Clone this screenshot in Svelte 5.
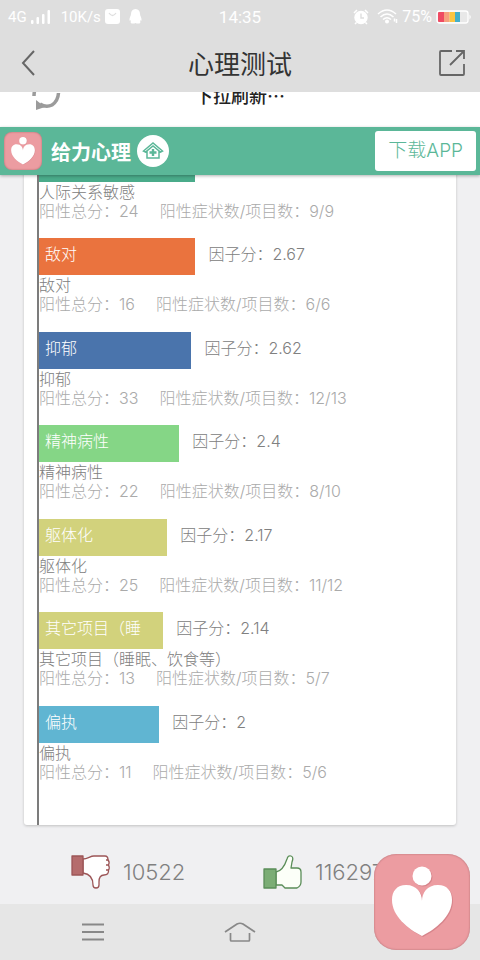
<script>
  const factors = [
    { name: '人际关系敏感', score: 2.67, total: 24, ratio: '9/9', width: 39, color: '#4aab8a' },
    { name: '敌对', score: 2.67, total: 16, ratio: '6/6', width: 39, color: '#ea733e' },
    { name: '抑郁', score: 2.62, total: 33, ratio: '12/13', width: 38, color: '#4a74ac' },
    { name: '精神病性', score: 2.4, total: 22, ratio: '8/10', width: 35, color: '#85d686' },
    { name: '躯体化', score: 2.17, total: 25, ratio: '11/12', width: 32, color: '#d2d27c' },
    { name: '其它项目（睡眠、饮食等）', score: 2.14, total: 13, ratio: '5/7', width: 31, color: '#d2d27c' },
    { name: '偏执', score: 2, total: 11, ratio: '5/6', width: 30, color: '#60b5d2' },
  ];

  const shortName = (name) => name.slice(0, 6);
</script>

{#snippet heart()}
  <svg class="heart" viewBox="0 0 96 96" aria-hidden="true">
    <g fill="#b8626b" opacity="0.4" transform="translate(1 1)">
      <circle cx="48" cy="22" r="9.500" />
      <path d="M48 47C48 39 43 31 32 31C23 31 18 37 18 46C18 62 34 75 48 82C62 75 78 62 78 46C78 37 73 31 64 31C53 31 48 39 48 47Z" />
    </g>
    <g fill="#fff">
      <circle cx="48" cy="22" r="9.500" />
      <path d="M48 47C48 39 43 31 32 31C23 31 18 37 18 46C18 62 34 75 48 82C62 75 78 62 78 46C78 37 73 31 64 31C53 31 48 39 48 47Z" />
    </g>
  </svg>
{/snippet}

<div class="page">
  <div class="status">
    <div class="status-side">
      <span>4G</span>
      <svg width="20" height="16" viewBox="0 0 20 16" fill="#fff">
        <rect x="0" y="11" width="2.500" height="4" rx="1" />
        <rect x="5.500" y="8" width="2.500" height="7" rx="1" />
        <rect x="11" y="5" width="2.500" height="10" rx="1" />
        <rect x="16.500" y="1" width="2.500" height="14" rx="1" />
      </svg>
      <span class="speed">10K/s</span>
      <svg width="15" height="15" viewBox="0 0 15 15">
        <rect width="15" height="15" rx="3" fill="#fff" />
        <path d="M4 4Q7.500 9 11 4" fill="none" stroke="#dedede" stroke-width="1.300" />
      </svg>
      <svg class="qq" width="13" height="15" viewBox="0 0 13 15" fill="#fff">
        <path d="M6.500 0C9.500 0 11 2.200 11 5C11 7 13 9 12.500 11.500C12.200 12 11.500 11 11.200 11.200C11 12.500 11.800 13 11 14.200C9 15 7.500 14.500 6.500 14C5.500 14.500 4 15 2 14.200C1.200 13 2 12.500 1.800 11.200C1.500 11 .8 12 .5 11.500C0 9 2 7 2 5C2 2.200 3.500 0 6.500 0Z" />
      </svg>
    </div>
    <time>14:35</time>
    <div class="status-side end">
      <svg width="16" height="16" viewBox="0 0 16 16">
        <circle cx="8" cy="8.500" r="6.700" fill="#fff" />
        <path d="M1 4L4 1M15 4L12 1M3.500 13.500L2 15M12.500 13.500L14 15" stroke="#fff" stroke-width="1.500" />
        <path d="M8 4.500V9H11" fill="none" stroke="#dedede" stroke-width="1.400" />
      </svg>
      <svg class="wifi" width="21" height="15" viewBox="0 0 21 15" fill="none" stroke="#fff" stroke-width="1.600">
        <path d="M1 5Q10 -3 19 5M3.500 8Q10 2 16.500 8M6 10.500Q10 7 14 10.500" />
        <circle cx="10" cy="12.500" r="1.200" fill="#fff" />
        <path d="M17.500 12.500V9.500M19.500 10V14" stroke-width="1.500" />
      </svg>
      <span>75%</span>
      <svg width="36" height="14" viewBox="0 0 36 14">
        <rect x="1" y="1" width="31" height="12" rx="2.500" fill="#e8e8e8" stroke="#fff" stroke-width="1.300" />
        <path d="M3 2H8V12H3A1 1 0 0 1 2 11V3A1 1 0 0 1 3 2Z" fill="#ef4b63" />
        <rect x="8" y="2" width="5.500" height="10" fill="#f7a07e" />
        <rect x="13.500" y="2" width="5.500" height="10" fill="#fac542" />
        <rect x="19" y="2" width="5" height="10" fill="#43afc9" />
        <path d="M33.500 4.500Q36 7 33.500 9.500Z" fill="#fff" />
      </svg>
    </div>
  </div>

  <header class="titlebar">
    <button type="button" aria-label="返回">
      <svg width="14" height="28" viewBox="0 0 14 28" fill="none" stroke="#666" stroke-width="2">
        <path d="M13 2L2 14L13 26" />
      </svg>
    </button>
    <h1>心理测试</h1>
    <button type="button" aria-label="分享">
      <svg width="28" height="28" viewBox="0 0 28 28" fill="none" stroke="#666" stroke-width="1.800">
        <path d="M14 2H3Q2 2 2 3V25Q2 26 3 26H25Q26 26 26 25V15M12 16L26 2M18 2H26V10" />
      </svg>
    </button>
  </header>

  <div class="refresh">
    <svg width="30" height="30" viewBox="0 0 30 30" fill="none" stroke="#9b9b9b" stroke-width="3.500">
      <path d="M2 16Q2 7 8 3" />
      <path d="M26.500 13Q26 21 20 25Q14 28 8 24" />
      <path d="M4 20V30L13 27Z" fill="#9b9b9b" stroke="none" />
    </svg>
    <span>下拉刷新⋯</span>
  </div>

  <div class="brand">
    <div class="logo">{@render heart()}</div>
    <strong>给力心理</strong>
    <a class="home" href="#home" aria-label="首页">
      <svg width="22" height="20" viewBox="0 0 22 20" fill="none" stroke="#5bb798" stroke-width="2">
        <path d="M1.500 10L11 2L20.500 10L18.500 11L11 5L3.500 11ZM5 10V17H17V10" stroke-width="1.500" />
        <path d="M11 8V15M7.500 11.500H14.500" stroke-width="2.400" />
      </svg>
    </a>
    <a class="download" href="#download">下载APP</a>
  </div>

  <main>
    <section class="card">
      <ul>
        {#each factors as factor}
          <li>
            <div class="row">
              <div class="bar" style="width: {factor.width}%; background: {factor.color}">
                {shortName(factor.name)}
              </div>
              <span class="score">因子分：{factor.score}</span>
            </div>
            <div class="name">{factor.name}</div>
            <div class="stats">
              <span>阳性总分：{factor.total}</span>
              <span>阳性症状数/项目数：{factor.ratio}</span>
            </div>
          </li>
        {/each}
      </ul>
    </section>

    <div class="votes">
      <button type="button">
        <svg width="40" height="36" viewBox="0 0 40 36" stroke="#9c5557" stroke-width="1.300" stroke-linejoin="round">
          <path d="M12 5C17 5 19 2 23 2H34Q37 2 37 6Q39 8 37.500 11Q39 14 37.500 16Q38 21 33 21C29 21 28 24 28 28V31Q28 34 25 34Q22 34 22 31C22 25 20 20 12 19Z" fill="#fff" />
          <path d="M37.500 6H35M37.500 11H35M37.500 16H35" />
          <rect x="1" y="2" width="11" height="19" fill="#b56c6d" />
        </svg>
        <span>10522</span>
      </button>
      <button type="button">
        <svg width="40" height="36" viewBox="0 0 40 36" stroke="#5a8d58" stroke-width="1.300" stroke-linejoin="round">
          <path d="M13 18C19 17 22 11 24 5Q25 1 28 2Q31 3 29 8L28 14H34Q38 14 38 18V28Q38 32 34 34H22L19 31H13Z" fill="#fcfff8" />
          <rect x="1" y="15" width="12" height="19" fill="#7bad75" />
        </svg>
        <span>116297</span>
      </button>
    </div>
  </main>

  <nav>
    <button type="button" aria-label="菜单">
      <svg width="24" height="20" viewBox="0 0 24 20" stroke="#888" stroke-width="1.800">
        <path d="M1 2.500H23M1 10H23M1 17.500H23" />
      </svg>
    </button>
    <button type="button" aria-label="主屏幕">
      <svg width="32" height="20" viewBox="0 0 32 20" fill="none" stroke="#888" stroke-width="1.700">
        <path d="M1 10L13 2Q16 .5 19 2L31 10M6.500 11V18Q6.500 19 7.500 19H24.500Q25.500 19 25.500 18V11" />
      </svg>
    </button>
  </nav>

  <button type="button" class="float" aria-label="给力心理">{@render heart()}</button>
</div>

<style>
  :global(body) {
    margin: 0;
  }

  .page {
    position: relative;
    display: flex;
    flex-direction: column;
    height: 100vh;
    overflow: hidden;
    background: #f0f0f2;
    color: #808080;
    font-family: Inter, 'Noto Sans CJK SC', sans-serif;
    font-size: 16px;
    font-weight: 300;
  }

  button {
    display: flex;
    align-items: center;
    justify-content: center;
    padding: 0;
    border: 0;
    background: none;
    color: inherit;
    font: inherit;
    cursor: pointer;
  }

  .status {
    display: grid;
    grid-template-columns: 1fr auto 1fr;
    align-items: center;
    height: 33px;
    padding: 0 8px;
    background: #dedede;
    color: #fff;
    font-family: Roboto, sans-serif;
    font-size: 15px;
    font-weight: 400;
  }

  .status time {
    font-size: 17px;
  }

  .status-side {
    display: flex;
    align-items: center;
    gap: 4px;
  }

  .speed {
    margin-left: 6px;
  }

  .qq {
    margin-left: 5px;
  }

  .wifi {
    margin-left: 4px;
  }

  .end {
    justify-content: flex-end;
    font-size: 16px;
  }

  .titlebar {
    display: grid;
    flex-shrink: 0;
    grid-template-columns: 28px 1fr 28px;
    align-items: center;
    height: 59px;
    padding: 0 14px;
    background: #dedede;
  }

  .titlebar h1 {
    margin: 0;
    color: #333;
    font-size: 26px;
    font-weight: 400;
    text-align: center;
  }

  .refresh {
    display: grid;
    flex-shrink: 0;
    grid-template-columns: 1fr auto 1fr;
    align-content: end;
    align-items: end;
    height: 35px;
    box-sizing: border-box;
    padding: 0 32px 17px;
    overflow: hidden;
    background: #fff;
    color: #222;
  }

  .refresh span {
    font-family: 'Noto Sans CJK SC', sans-serif;
    font-size: 18px;
    font-weight: 500;
    line-height: 30px;
  }

  .brand {
    z-index: 1;
    display: flex;
    flex-shrink: 0;
    align-items: center;
    height: 48px;
    padding: 0 4px;
    background: #5bb798;
    box-shadow: 0 1px 3px rgba(0, 0, 0, 0.3);
  }

  .brand strong {
    margin: 0 6px 0 9px;
    color: #fff;
    font-size: 20px;
    font-weight: 700;
  }

  .logo,
  .float {
    background: #ec9ca1;
    box-shadow: inset 0 0 2px #a8666b;
  }

  .logo {
    width: 38px;
    height: 38px;
    border-radius: 8px;
  }

  .heart {
    display: block;
    width: 100%;
  }

  .home {
    display: flex;
    align-items: center;
    justify-content: center;
    width: 32px;
    height: 32px;
    border-radius: 50%;
    background: #fff;
  }

  .download {
    margin-left: auto;
    padding: 0 13px;
    border-radius: 3px;
    background: #fff;
    color: #5bb798;
    font-size: 19px;
    line-height: 40px;
    text-decoration: none;
  }

  main {
    display: flex;
    flex: 1;
    flex-direction: column;
    justify-content: flex-end;
    min-height: 0;
    overflow: hidden;
  }

  .card {
    flex-shrink: 0;
    margin: 0 24px;
    padding: 0 16px 0 13px;
    border-radius: 3px;
    background: #fff;
    box-shadow: 0 1px 3px rgba(0, 0, 0, 0.2);
  }

  ul {
    display: grid;
    grid-auto-rows: 1fr;
    min-height: 654px;
    margin: 0;
    padding: 0 0 26px;
    border-left: 2px solid #7c7c7c;
    list-style: none;
  }

  .row {
    display: flex;
    gap: 13px;
    height: 37px;
    line-height: 32px;
  }

  .bar {
    box-sizing: border-box;
    padding-left: 6px;
    overflow: hidden;
    color: #fff;
    white-space: nowrap;
  }

  .name,
  .stats {
    line-height: 19px;
  }

  .name {
    padding-top: 1px;
  }

  .stats {
    display: flex;
    gap: 21px;
    color: #aaa;
  }

  .votes {
    display: grid;
    flex-shrink: 0;
    grid-template-columns: 1fr 1fr;
    height: 79px;
    padding: 0 48px;
  }

  .votes button {
    justify-content: flex-start;
    gap: 12px;
    padding: 14px 0 0 23px;
    font-size: 22px;
  }

  nav {
    display: grid;
    flex-shrink: 0;
    grid-template-columns: repeat(3, 1fr);
    height: 56px;
    padding: 0 20px;
    background: #e6e6e6;
  }

  .float {
    position: absolute;
    right: 10px;
    bottom: 10px;
    width: 96px;
    height: 96px;
    border-radius: 22px;
  }
</style>
